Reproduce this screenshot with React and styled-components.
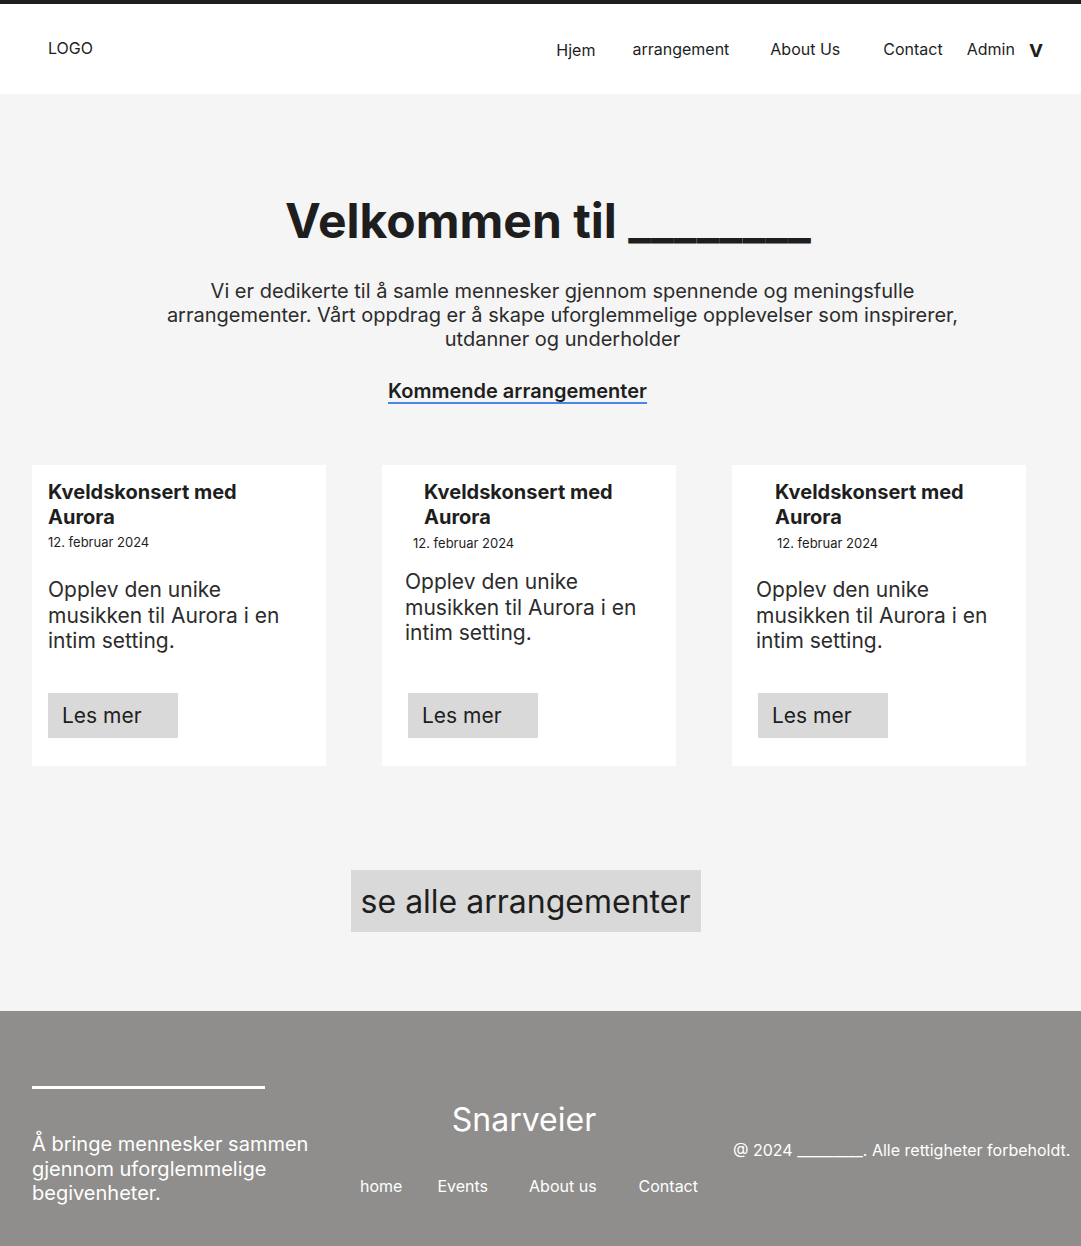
import React from "react";
import styled, { createGlobalStyle } from "styled-components";

const GlobalStyle = createGlobalStyle`
  body {
    margin: 0;
    font-family: Inter, "Noto Sans", sans-serif;
    color: #1e1e1e;
    background: #f5f5f5;
  }
`;

const Page = styled.div`
  width: 1081px;
  border-top: 4px solid #1e1e1e;
`;

const Header = styled.header`
  height: 90px;
  background: #fff;
  display: flex;
  align-items: center;
  justify-content: space-between;
  padding: 0 38px 0 48px;
  box-sizing: border-box;
`;

const Logo = styled.div`
  font-size: 16px;
  margin-top: -3px;
`;

const Nav = styled.nav`
  display: flex;
  align-items: center;
`;

const NavLink = styled.a`
  font-size: 16px;
  color: #1e1e1e;
  margin-left: ${(p) => p.$gap}px;
  margin-top: ${(p) => (p.$low ? 2 : 0)}px;
`;

const Chevron = styled.span`
  font-size: 24px;
  font-weight: 600;
  margin-left: 14px;
  margin-top: -2px;
`;

const Main = styled.main`
  background: #f5f5f5;
  padding: 98px 0 79px;
  display: flex;
  flex-direction: column;
  align-items: center;
`;

const Title = styled.h1`
  margin: 0 0 0 15px;
  font-size: 48px;
  line-height: 58px;
  font-weight: 700;
`;

const Intro = styled.p`
  margin: 29px 0 0 44px;
  width: 820px;
  text-align: center;
  font-size: 20px;
  line-height: 24px;
  color: #2c2c2c;
`;

const Upcoming = styled.a`
  margin: 28px 46px 0 0;
  font-size: 20px;
  font-weight: 600;
  line-height: 24px;
  color: #1e1e1e;
  text-decoration: underline;
  text-decoration-color: #4a86e8;
  text-decoration-thickness: 2px;
  text-decoration-skip-ink: none;
  text-underline-offset: 4px;
`;

const Cards = styled.div`
  margin-top: 62px;
  align-self: stretch;
  display: flex;
  gap: 56px;
  padding-left: 32px;
`;

const Card = styled.article`
  width: 294px;
  height: 301px;
  background: #fff;
  padding-top: 15px;
  box-sizing: border-box;
  display: flex;
  flex-direction: column;
`;

const CardTitle = styled.h3`
  margin: 0 0 0 ${(p) => p.$indent}px;
  font-size: 20px;
  line-height: 25px;
  font-weight: 700;
  width: 230px;
`;

const CardDate = styled.div`
  margin: ${(p) => p.$top}px 0 0 ${(p) => p.$indent}px;
  font-size: 13px;
  line-height: 16px;
`;

const CardText = styled.p`
  margin: ${(p) => p.$top}px 0 0 ${(p) => p.$indent}px;
  font-size: 21px;
  line-height: 25.5px;
  width: 250px;
  color: #2c2c2c;
`;

const MoreButton = styled.button`
  margin: auto 0 28px ${(p) => p.$indent}px;
  width: 130px;
  height: 45px;
  border: none;
  background: #d9d9d9;
  font-family: inherit;
  font-size: 21px;
  color: #1e1e1e;
  text-align: left;
  padding: 0 0 0 14px;
`;

const AllButton = styled.button`
  margin: 104px 0 0 -30px;
  width: 350px;
  height: 62px;
  border: none;
  background: #d9d9d9;
  font-family: inherit;
  font-size: 32px;
  color: #1e1e1e;
`;

const Footer = styled.footer`
  background: #8f8e8c;
  height: 235px;
  color: #fff;
  display: grid;
  grid-template-columns: 328px 328px 1fr;
  box-sizing: border-box;
  padding-left: 32px;
`;

const About = styled.div`
  padding-top: 75px;
`;

const Rule = styled.div`
  width: 233px;
  height: 3px;
  background: #fff;
`;

const Tagline = styled.p`
  margin: 43px 0 0;
  font-size: 20px;
  line-height: 24.5px;
  width: 290px;
`;

const Shortcuts = styled.div`
  padding-top: 89px;
  display: flex;
  flex-direction: column;
  align-items: center;
`;

const ShortcutsTitle = styled.h2`
  margin: 0;
  font-size: 32px;
  line-height: 40px;
  font-weight: 400;
`;

const FooterLinks = styled.div`
  margin: 36px 0 0 10px;
  display: flex;
  white-space: nowrap;
`;

const FooterLink = styled.a`
  font-size: 16px;
  color: #fff;
  margin-left: ${(p) => p.$gap}px;
`;

const Copy = styled.div`
  padding-top: 129px;
  font-size: 16px;
  margin-left: 45px;
  white-space: nowrap;
`;

const cards = [
  { title: 16, date: 16, dateTop: 4, text: 16, textTop: 27, btn: 16 },
  { title: 42, date: 31, dateTop: 5, text: 23, textTop: 18, btn: 26 },
  { title: 43, date: 45, dateTop: 5, text: 24, textTop: 26, btn: 26 },
];

export default function App() {
  return (
    <Page>
      <GlobalStyle />
      <Header>
        <Logo>LOGO</Logo>
        <Nav>
          <NavLink $gap={0} $low>Hjem</NavLink>
          <NavLink $gap={37}>arrangement</NavLink>
          <NavLink $gap={41}>About Us</NavLink>
          <NavLink $gap={43}>Contact</NavLink>
          <NavLink $gap={24}>Admin</NavLink>
          <Chevron>v</Chevron>
        </Nav>
      </Header>
      <Main>
        <Title>Velkommen til ________</Title>
        <Intro>
          Vi er dedikerte til å samle mennesker gjennom spennende og meningsfulle
          arrangementer. Vårt oppdrag er å skape uforglemmelige opplevelser som
          inspirerer, utdanner og underholder
        </Intro>
        <Upcoming>Kommende arrangementer</Upcoming>
        <Cards>
          {cards.map((c, i) => (
            <Card key={i}>
              <CardTitle $indent={c.title}>Kveldskonsert med Aurora</CardTitle>
              <CardDate $indent={c.date} $top={c.dateTop}>
                12. februar 2024
              </CardDate>
              <CardText $indent={c.text} $top={c.textTop}>
                Opplev den unike musikken til Aurora i en intim setting.
              </CardText>
              <MoreButton $indent={c.btn}>Les mer</MoreButton>
            </Card>
          ))}
        </Cards>
        <AllButton>se alle arrangementer</AllButton>
      </Main>
      <Footer>
        <About>
          <Rule />
          <Tagline>Å bringe mennesker sammen gjennom uforglemmelige begivenheter.</Tagline>
        </About>
        <Shortcuts>
          <ShortcutsTitle>Snarveier</ShortcutsTitle>
          <FooterLinks>
            <FooterLink $gap={0}>home</FooterLink>
            <FooterLink $gap={35}>Events</FooterLink>
            <FooterLink $gap={41}>About us</FooterLink>
            <FooterLink $gap={42}>Contact</FooterLink>
          </FooterLinks>
        </Shortcuts>
        <Copy>@ 2024 _________. Alle rettigheter forbeholdt.</Copy>
      </Footer>
    </Page>
  );
}
